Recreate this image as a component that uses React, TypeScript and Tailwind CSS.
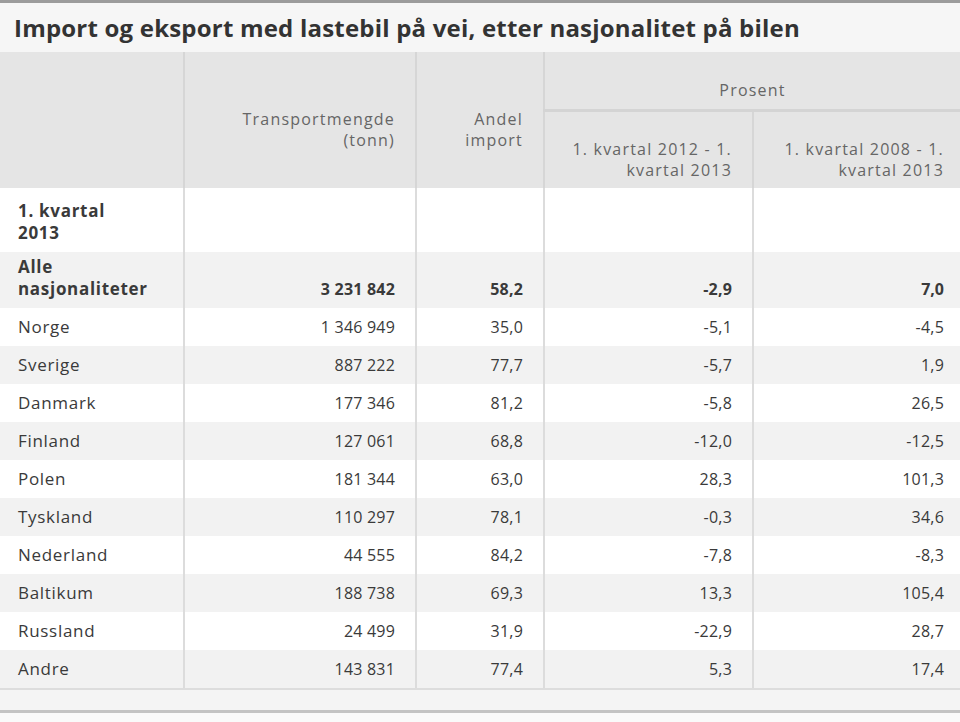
const rows: [string, string, string, string, string][] = [
  ['Norge', '1 346 949', '35,0', '-5,1', '-4,5'],
  ['Sverige', '887 222', '77,7', '-5,7', '1,9'],
  ['Danmark', '177 346', '81,2', '-5,8', '26,5'],
  ['Finland', '127 061', '68,8', '-12,0', '-12,5'],
  ['Polen', '181 344', '63,0', '28,3', '101,3'],
  ['Tyskland', '110 297', '78,1', '-0,3', '34,6'],
  ['Nederland', '44 555', '84,2', '-7,8', '-8,3'],
  ['Baltikum', '188 738', '69,3', '13,3', '105,4'],
  ['Russland', '24 499', '31,9', '-22,9', '28,7'],
  ['Andre', '143 831', '77,4', '5,3', '17,4'],
];

const cell = 'align-bottom pb-[8px] border-r-2 border-[#dcdcdc]';
const num = `${cell} text-right pr-[20px] text-[16px] tracking-[0.2px]`;
const name = `${cell} pl-[18px] text-[17px] tracking-[0.7px]`;

export default function App() {
  return (
    <div className="w-[960px] h-[722px] overflow-hidden bg-white font-['Open_Sans',sans-serif] text-[#3a3a3a]">
      <div className="h-[3px] bg-[#9c9c9c]" />
      <div className="h-[49px] bg-[#f6f6f6] pl-[14px] flex items-center text-[24px] font-bold text-[#333] tracking-[0.2px]">
        Import og eksport med lastebil på vei, etter nasjonalitet på bilen
      </div>

      <table className="w-full table-fixed border-collapse text-[16px] leading-[22px]">
        <colgroup>
          <col className="w-[184px]" />
          <col className="w-[232px]" />
          <col className="w-[128px]" />
          <col className="w-[209px]" />
          <col />
        </colgroup>
        <thead className="bg-[#e5e5e5] text-[#666] font-normal text-[16px] leading-[21px] tracking-[1.2px]">
          <tr className="h-[58px]">
            <th rowSpan={2} className="border-r-2 border-[#d6d6d6]" />
            <th rowSpan={2} className="align-middle pt-[20px] text-right pr-[20px] font-normal border-r-2 border-[#d6d6d6]">
              Transportmengde
              <br />
              (tonn)
            </th>
            <th rowSpan={2} className="align-middle pt-[20px] text-right pr-[20px] font-normal border-r-2 border-[#d6d6d6]">
              Andel
              <br />
              import
            </th>
            <th colSpan={2} className="align-middle pt-[20px] text-center font-normal border-b-[3px] border-[#d4d4d4]">
              Prosent
            </th>
          </tr>
          <tr className="h-[78px]">
            <th className="align-middle pt-[20px] text-right pr-[20px] font-normal border-r-2 border-[#d6d6d6]">
              1. kvartal 2012 - 1.
              <br />
              kvartal 2013
            </th>
            <th className="align-middle pt-[20px] text-right pr-[16px] font-normal">
              1. kvartal 2008 - 1.
              <br />
              kvartal 2013
            </th>
          </tr>
        </thead>
        <tbody>
          <tr className="h-[64px] bg-white font-bold">
            <td className={name}>
              1. kvartal
              <br />
              2013
            </td>
            <td className={cell} />
            <td className={cell} />
            <td className={cell} />
            <td className="align-bottom" />
          </tr>
          <tr className="h-[56px] bg-[#f2f2f2] font-bold">
            <td className={name}>
              Alle
              <br />
              nasjonaliteter
            </td>
            <td className={num}>3 231 842</td>
            <td className={num}>58,2</td>
            <td className={num}>-2,9</td>
            <td className="align-bottom pb-[8px] text-right pr-[16px]">7,0</td>
          </tr>
          {rows.map(([label, t, a, p1, p2], i) => (
            <tr key={label} className={`h-[38px] ${i % 2 === 0 ? 'bg-white' : 'bg-[#f2f2f2]'}`}>
              <td className={name}>{label}</td>
              <td className={num}>{t}</td>
              <td className={num}>{a}</td>
              <td className={num}>{p1}</td>
              <td className="align-bottom pb-[8px] text-right pr-[16px] tracking-[0.2px]">{p2}</td>
            </tr>
          ))}
        </tbody>
      </table>

      <div className="h-[22px] bg-[#f4f4f4] border-t-2 border-[#dddddd]" />
      <div className="h-[3px] bg-[#c4c4c4]" />
      <div className="h-full bg-[#fafafa]" />
    </div>
  );
}
